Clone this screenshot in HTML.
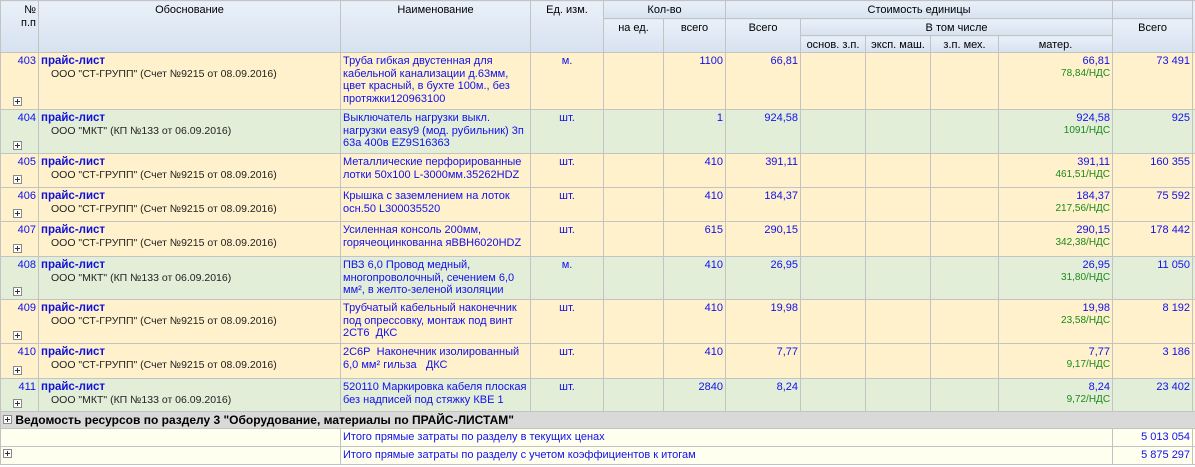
<!DOCTYPE html>
<html><head><meta charset="utf-8"><style>
body{margin:0;width:1195px;height:467px;overflow:hidden;background:#fff;font-family:"Liberation Sans",sans-serif;font-size:11px;}
table{border-collapse:collapse;table-layout:fixed;width:1195px;}
td,th{border:1px solid #c3c3c3;padding:0 2px;vertical-align:top;overflow:hidden;white-space:nowrap;line-height:12.5px;}
td{padding-top:2px;}
th{background:linear-gradient(#e9f0f9,#d7e2f0);font-weight:normal;color:#000;text-align:center;vertical-align:top;padding-top:3px;height:13px;}
.y td{background:#fff1cb;}
.g td{background:#e3eed9;}
.b{color:#1010ee;}
.r{text-align:right;}
.c{text-align:center;}
.n{color:#1a8a1a;font-size:10px;}
.pl{font-weight:bold;color:#1010dd;font-size:11.5px;}
.sub{color:#222;font-size:10.5px;padding-left:10px;}
.pm{display:inline-block;width:7px;height:7px;border:1px solid #8a8a8a;background:#fff;position:relative;font-size:0;}
.pm:before{content:"";position:absolute;left:1px;top:3px;width:5px;height:1px;background:#333;}
.pm:after{content:"";position:absolute;left:3px;top:1px;width:1px;height:5px;background:#333;}
td.num{position:relative;}
td.num .pm{position:absolute;left:12px;bottom:3px;}
.grp td{background:#d9d9d9;font-weight:bold;font-size:12px;padding-top:0;}
.tot td{background:#fffff0;padding-top:0;}
</style></head><body>
<table>
<colgroup><col style="width:38px"><col style="width:302px"><col style="width:190px"><col style="width:73px"><col style="width:60px"><col style="width:62px"><col style="width:75px"><col style="width:65px"><col style="width:65px"><col style="width:68px"><col style="width:114px"><col style="width:80px"><col style="width:3px"></colgroup>
<tr style="height:18px"><th rowspan="3" style="text-align:right">№<br>п.п</th><th rowspan="3">Обоснование</th><th rowspan="3">Наименование</th><th rowspan="3">Ед. изм.</th><th colspan="2">Кол-во</th><th colspan="5">Стоимость единицы</th><th rowspan="1"></th><th rowspan="3"></th></tr>
<tr style="height:17px"><th rowspan="2">на ед.</th><th rowspan="2">всего</th><th rowspan="2">Всего</th><th colspan="4">В том числе</th><th rowspan="2">Всего</th></tr>
<tr style="height:17px"><th>основ. з.п.</th><th>эксп. маш.</th><th>з.п. мех.</th><th>матер.</th></tr>

<tr class="y" style="height:57px"><td class="b r num">403<span class="pm"></span></td><td><div class="pl">прайс-лист</div><div class="sub">ООО "СТ-ГРУПП" (Счет №9215 от 08.09.2016)</div></td><td class="b">Труба гибкая двустенная для<br>кабельной канализации д.63мм,<br>цвет красный, в бухте 100м., без<br>протяжки120963100</td><td class="b c">м.</td><td></td><td class="b r">1100</td><td class="b r">66,81</td><td></td><td></td><td></td><td class="b r">66,81<div class="n">78,84/НДС</div></td><td class="b r">73 491</td><td></td></tr>
<tr class="g" style="height:44px"><td class="b r num">404<span class="pm"></span></td><td><div class="pl">прайс-лист</div><div class="sub">ООО "МКТ" (КП №133 от 06.09.2016)</div></td><td class="b">Выключатель нагрузки выкл.<br>нагрузки easy9 (мод. рубильник) 3п<br>63а 400в EZ9S16363</td><td class="b c">шт.</td><td></td><td class="b r">1</td><td class="b r">924,58</td><td></td><td></td><td></td><td class="b r">924,58<div class="n">1091/НДС</div></td><td class="b r">925</td><td></td></tr>
<tr class="y" style="height:34px"><td class="b r num">405<span class="pm"></span></td><td><div class="pl">прайс-лист</div><div class="sub">ООО "СТ-ГРУПП" (Счет №9215 от 08.09.2016)</div></td><td class="b">Металлические перфорированные<br>лотки 50x100 L-3000мм.35262HDZ</td><td class="b c">шт.</td><td></td><td class="b r">410</td><td class="b r">391,11</td><td></td><td></td><td></td><td class="b r">391,11<div class="n">461,51/НДС</div></td><td class="b r">160 355</td><td></td></tr>
<tr class="y" style="height:34px"><td class="b r num">406<span class="pm"></span></td><td><div class="pl">прайс-лист</div><div class="sub">ООО "СТ-ГРУПП" (Счет №9215 от 08.09.2016)</div></td><td class="b">Крышка с заземлением на лоток<br>осн.50 L300035520</td><td class="b c">шт.</td><td></td><td class="b r">410</td><td class="b r">184,37</td><td></td><td></td><td></td><td class="b r">184,37<div class="n">217,56/НДС</div></td><td class="b r">75 592</td><td></td></tr>
<tr class="y" style="height:35px"><td class="b r num">407<span class="pm"></span></td><td><div class="pl">прайс-лист</div><div class="sub">ООО "СТ-ГРУПП" (Счет №9215 от 08.09.2016)</div></td><td class="b">Усиленная консоль 200мм,<br>горячеоцинкованна яВВН6020HDZ</td><td class="b c">шт.</td><td></td><td class="b r">615</td><td class="b r">290,15</td><td></td><td></td><td></td><td class="b r">290,15<div class="n">342,38/НДС</div></td><td class="b r">178 442</td><td></td></tr>
<tr class="g" style="height:43px"><td class="b r num">408<span class="pm"></span></td><td><div class="pl">прайс-лист</div><div class="sub">ООО "МКТ" (КП №133 от 06.09.2016)</div></td><td class="b">ПВЗ 6,0 Провод медный,<br>многопроволочный, сечением 6,0<br>мм², в желто-зеленой изоляции</td><td class="b c">м.</td><td></td><td class="b r">410</td><td class="b r">26,95</td><td></td><td></td><td></td><td class="b r">26,95<div class="n">31,80/НДС</div></td><td class="b r">11 050</td><td></td></tr>
<tr class="y" style="height:44px"><td class="b r num">409<span class="pm"></span></td><td><div class="pl">прайс-лист</div><div class="sub">ООО "СТ-ГРУПП" (Счет №9215 от 08.09.2016)</div></td><td class="b">Трубчатый кабельный наконечник<br>под опрессовку, монтаж под винт<br>2СТ6 &nbsp;ДКС</td><td class="b c">шт.</td><td></td><td class="b r">410</td><td class="b r">19,98</td><td></td><td></td><td></td><td class="b r">19,98<div class="n">23,58/НДС</div></td><td class="b r">8 192</td><td></td></tr>
<tr class="y" style="height:35px"><td class="b r num">410<span class="pm"></span></td><td><div class="pl">прайс-лист</div><div class="sub">ООО "СТ-ГРУПП" (Счет №9215 от 08.09.2016)</div></td><td class="b">2С6Р &nbsp;Наконечник изолированный<br>6,0 мм² гильза &nbsp;&nbsp;ДКС</td><td class="b c">шт.</td><td></td><td class="b r">410</td><td class="b r">7,77</td><td></td><td></td><td></td><td class="b r">7,77<div class="n">9,17/НДС</div></td><td class="b r">3 186</td><td></td></tr>
<tr class="g" style="height:33px"><td class="b r num">411<span class="pm"></span></td><td><div class="pl">прайс-лист</div><div class="sub">ООО "МКТ" (КП №133 от 06.09.2016)</div></td><td class="b">520110 Маркировка кабеля плоская<br>без надписей под стяжку КВЕ 1</td><td class="b c">шт.</td><td></td><td class="b r">2840</td><td class="b r">8,24</td><td></td><td></td><td></td><td class="b r">8,24<div class="n">9,72/НДС</div></td><td class="b r">23 402</td><td></td></tr>
<tr class="grp" style="height:17px"><td colspan="13" style="padding-left:2px;vertical-align:middle"><span class="pm"></span> Ведомость ресурсов по разделу 3 "Оборудование, материалы по ПРАЙС-ЛИСТАМ"</td></tr>
<tr class="tot" style="height:18px"><td colspan="2"></td><td colspan="9" class="b" style="vertical-align:middle">Итого прямые затраты по разделу в текущих ценах</td><td class="b r" style="vertical-align:middle">5 013 054</td><td></td></tr>
<tr class="tot" style="height:18px"><td colspan="2" style="vertical-align:middle"><span class="pm"></span></td><td colspan="9" class="b" style="vertical-align:middle">Итого прямые затраты по разделу с учетом коэффициентов к итогам</td><td class="b r" style="vertical-align:middle">5 875 297</td><td></td></tr>
</table>
</body></html>
